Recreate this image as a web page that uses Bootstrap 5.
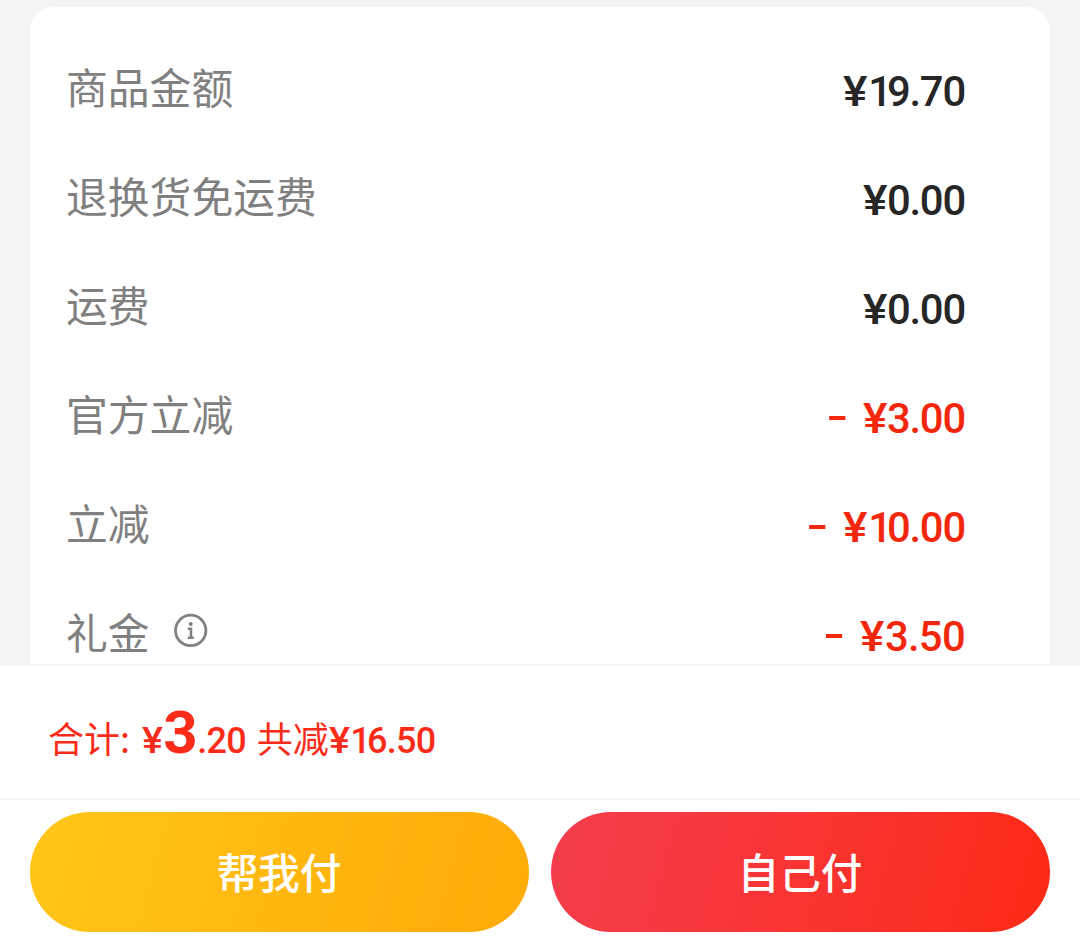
<!DOCTYPE html>
<html lang="zh-CN">

<head>
    <meta charset="UTF-8">
    <meta name="viewport" content="width=device-width, initial-scale=1">
    <title>支付</title>
    <link href="https://cdn.jsdelivr.net/npm/bootstrap@5.3.0/dist/css/bootstrap.min.css" rel="stylesheet">
    <style>
        body {
            background: #f4f4f4;
            font-family: "Noto Sans CJK SC", sans-serif;
        }

        .fee-panel {
            height: 664px;
            padding: 7px 30px 0;
        }

        .fee-card {
            border-radius: 24px 24px 0 0;
            padding: 25px 85px 0 36px;
        }

        .fee-row {
            height: 109px;
            font-size: 41.8px;
            line-height: 109px;
            color: #808080;
        }

        .fee-row svg {
            margin-bottom: 4px;
        }

        .price {
            font-family: Roboto, sans-serif;
            font-weight: 500;
            letter-spacing: -1.2px;
            color: #262626;
            padding-top: 5px;
        }

        .yen {
            display: inline-block;
            transform: scaleX(1.1);
            margin-right: 2px;
        }

        .one {
            letter-spacing: -5px;
            margin-left: 1px;
        }

        .minus {
            display: inline-block;
            transform: translateY(-2px) scaleX(1.5);
            margin-right: 21px;
        }

        .off {
            color: #f2270c;
        }

        .wide {
            letter-spacing: -.7px;
        }

        .total-bar {
            height: 136px;
            border-top: 2px solid #f6f6f6;
            border-bottom: 2px solid #f6f6f6;
            padding: 0 48px;
            font-size: 36px;
            line-height: 142px;
            color: #fa2c19;
        }

        .total-bar .price {
            color: inherit;
            padding: 0;
            letter-spacing: -.8px;
        }

        .total-bar .one {
            letter-spacing: -3.5px;
            margin-left: 0;
        }

        .total-bar .big {
            font-size: 60px;
            font-weight: 700;
            line-height: 1;
            letter-spacing: -.5px;
        }

        .total-label {
            width: 95px;
        }

        .total-off {
            margin-left: 11px;
            margin-right: 1px;
        }

        .pay-bar {
            height: 144px;
            padding: 12px 30px;
            gap: 22px;
        }

        .pay-btn {
            height: 120px;
            font-size: 41.5px;
            font-weight: 500;
            color: #fff !important;
            border: 0;
            padding: 0 1px 1px 0;
        }

        .pay-friend {
            background: linear-gradient(105deg, #ffc619, #ffaa08);
        }

        .pay-self {
            background: linear-gradient(105deg, #f43e4e, #fc2a16);
        }
    </style>
</head>

<body>
    <!-- Fee details -->
    <div class="fee-panel overflow-hidden">
        <div class="fee-card bg-white h-100">
            <div class="fee-row d-flex justify-content-between">
                <span>商品金额</span>
                <span class="price"><span class="yen">¥</span><span class="one">1</span>9.70</span>
            </div>
            <div class="fee-row d-flex justify-content-between">
                <span>退换货免运费</span>
                <span class="price"><span class="yen">¥</span>0.00</span>
            </div>
            <div class="fee-row d-flex justify-content-between">
                <span>运费</span>
                <span class="price"><span class="yen">¥</span>0.00</span>
            </div>
            <div class="fee-row d-flex justify-content-between">
                <span>官方立减</span>
                <span class="price off"><span class="minus">-</span><span class="yen">¥</span>3.00</span>
            </div>
            <div class="fee-row d-flex justify-content-between">
                <span>立减</span>
                <span class="price off"><span class="minus">-</span><span class="yen">¥</span><span class="one">1</span>0.00</span>
            </div>
            <div class="fee-row d-flex justify-content-between">
                <div class="d-flex align-items-center">
                    <span>礼金</span>
                    <svg class="ms-4" width="34" height="34" viewBox="0 0 34 34" fill="none" stroke="#808080">
                        <circle cx="16.7" cy="17.4" r="15.2" stroke-width="2.8" />
                        <circle cx="16.7" cy="11" r="2" fill="#808080" stroke="none" />
                        <path d="M13.8 15.8h3.2v9M13.8 24.8h6" stroke-width="2.5" />
                    </svg>
                </div>
                <span class="price off wide"><span class="minus">-</span><span class="yen">¥</span>3.50</span>
            </div>
        </div>
    </div>

    <!-- Total -->
    <div class="total-bar bg-white d-flex align-items-baseline">
        <span class="total-label">合计:</span>
        <span class="price"><span class="yen">¥</span></span>
        <span class="price big">3</span>
        <span class="price">.20</span>
        <span class="total-off">共减</span>
        <span class="price"><span class="yen">¥</span><span class="one">1</span>6.50</span>
    </div>

    <!-- Buttons -->
    <div class="pay-bar bg-white d-flex">
        <button type="button" class="btn rounded-pill flex-fill pay-btn pay-friend">帮我付</button>
        <button type="button" class="btn rounded-pill flex-fill pay-btn pay-self">自己付</button>
    </div>

    <script src="https://cdn.jsdelivr.net/npm/bootstrap@5.3.0/dist/js/bootstrap.bundle.min.js"></script>
</body>

</html>
